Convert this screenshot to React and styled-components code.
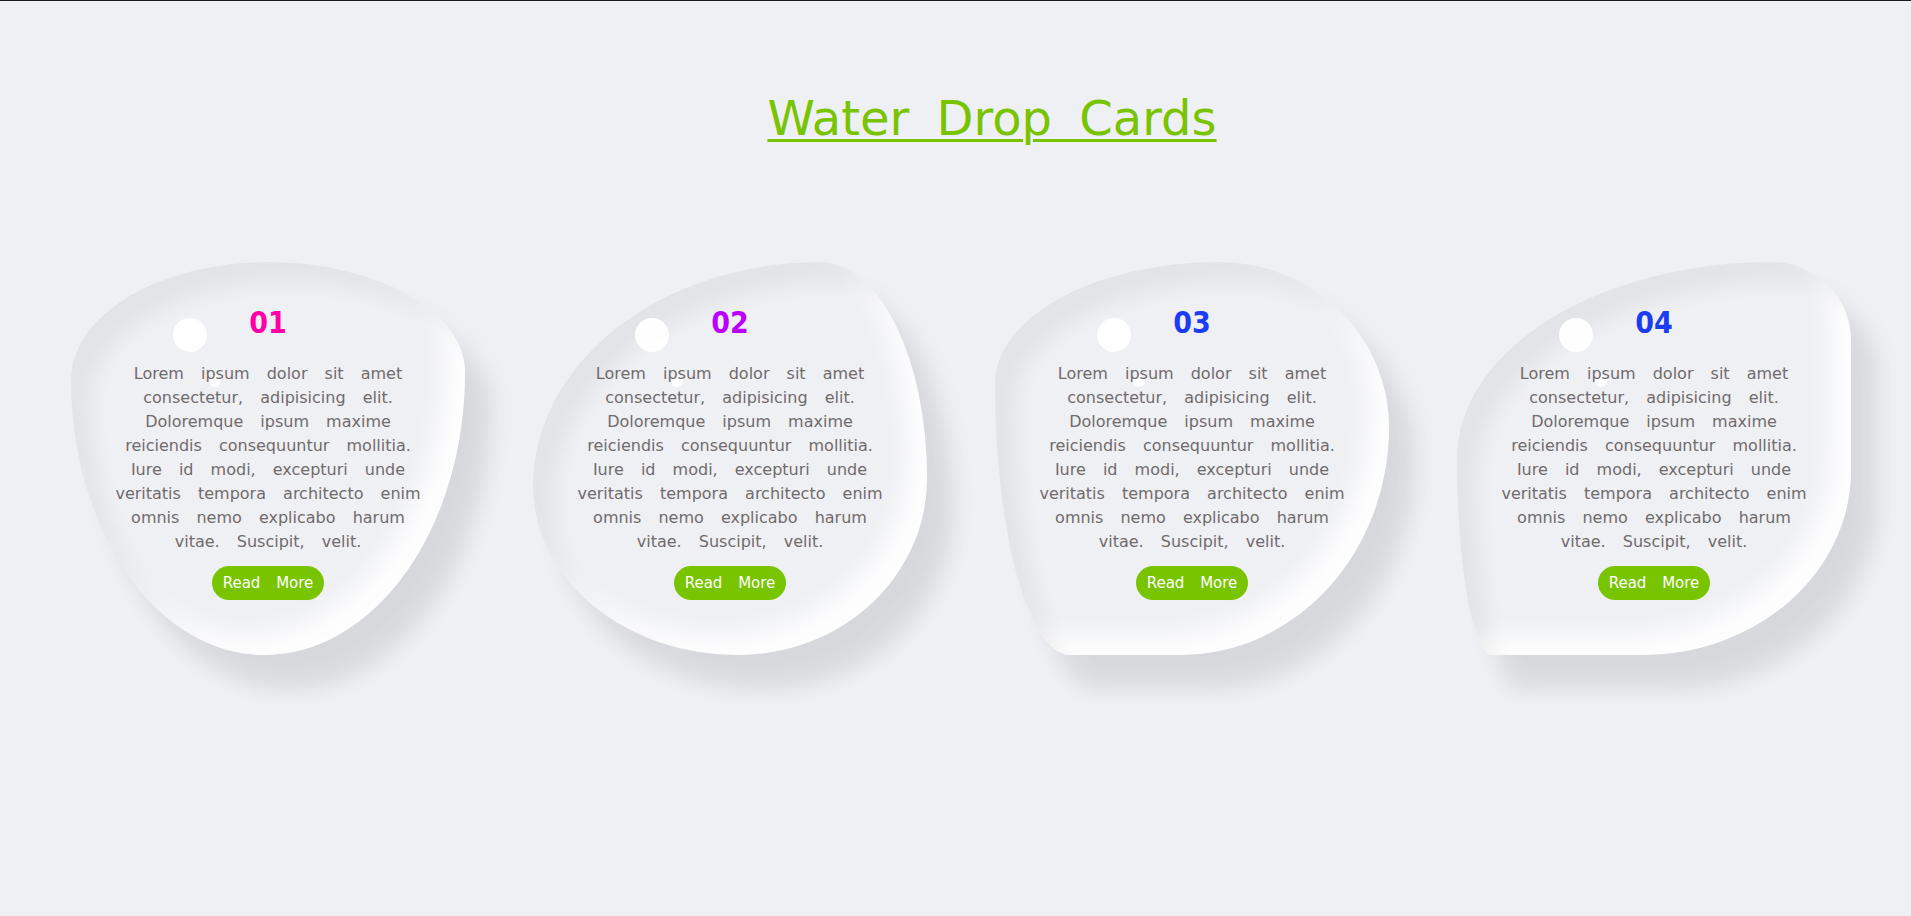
import styled, { createGlobalStyle } from "styled-components"

const Global = createGlobalStyle`
  html, body {
    margin: 0;
    padding: 0;
  }
  body {
    background: #eff0f4;
    border-top: 1px solid #1c1c1c;
    font-family: "DejaVu Sans", Verdana, sans-serif;
  }
`

const Page = styled.div`
  min-height: 915px;
  background: #eff0f4;
  display: flex;
  flex-direction: column;
`

const Title = styled.h1`
  margin: 89px 0 0;
  padding-left: 73px;
  text-align: center;
  font-size: 48px;
  font-weight: normal;
  color: #78c400;
  word-spacing: 12px;
  text-decoration: underline;
  text-decoration-thickness: 3px;
  text-underline-offset: 4px;
`

const Row = styled.div`
  display: flex;
  gap: 68px;
  padding-left: 71px;
  margin-top: 116px;
`

const Drop = styled.div`
  position: relative;
  flex: none;
  box-sizing: border-box;
  width: 394px;
  height: 393px;
  padding: 43px 35px 0;
  border-radius: ${(p) => p.$shape};
  box-shadow: inset 20px 20px 20px rgba(0, 0, 0, 0.05),
    25px 35px 20px rgba(0, 0, 0, 0.05),
    25px 30px 30px rgba(0, 0, 0, 0.05),
    inset -20px -20px 25px rgba(255, 255, 255, 0.9);
  display: flex;
  flex-direction: column;
  align-items: center;
  text-align: center;

  &::before {
    content: "";
    position: absolute;
    left: 102px;
    top: 56px;
    width: 34px;
    height: 34px;
    border-radius: 50%;
    background: #fff;
    opacity: 0.95;
  }

  &::after {
    content: "";
    position: absolute;
    left: 138px;
    top: 113px;
    width: 12px;
    height: 12px;
    border-radius: 50%;
    background: #fff;
    opacity: 0.9;
  }
`

const Num = styled.h2`
  position: relative;
  z-index: 1;
  margin: 0;
  font-family: "DejaVu Sans Condensed", "DejaVu Sans", sans-serif;
  font-stretch: condensed;
  font-size: 30px;
  color: ${(p) => p.$color};
`

const Text = styled.p`
  position: relative;
  z-index: 1;
  margin: 22px 0 0;
  font-size: 16px;
  line-height: 24px;
  color: #6f6b6b;
  word-spacing: 12px;
`

const Btn = styled.a`
  position: relative;
  z-index: 1;
  margin-top: 12px;
  padding: 8px 11px;
  border-radius: 20px;
  background: #78c400;
  color: #fff;
  font-size: 15px;
  line-height: 18px;
  word-spacing: 11px;
  text-decoration: none;
`

const cards = [
  { n: "01", color: "#ff00a8", shape: "50% 50% 51% 49% / 30% 28% 72% 70%" },
  { n: "02", color: "#bb00ff", shape: "73% 27% 48% 52% / 57% 55% 45% 43%" },
  { n: "03", color: "#1d3cf2", shape: "57% 43% 53% 19% / 31% 42% 58% 69%" },
  { n: "04", color: "#1d3cf2", shape: "80% 20% 53% 9% / 50% 20% 47% 50%" },
]

const lorem =
  "Lorem ipsum dolor sit amet consectetur, adipisicing elit. Doloremque ipsum maxime reiciendis consequuntur mollitia. Iure id modi, excepturi unde veritatis tempora architecto enim omnis nemo explicabo harum vitae. Suscipit, velit."

export default function App() {
  return (
    <>
      <Global />
      <Page>
        <Title>Water Drop Cards</Title>
        <Row>
          {cards.map((c) => (
            <Drop key={c.n} $shape={c.shape}>
              <Num $color={c.color}>{c.n}</Num>
              <Text>{lorem}</Text>
              <Btn href="#">Read More</Btn>
            </Drop>
          ))}
        </Row>
      </Page>
    </>
  )
}
